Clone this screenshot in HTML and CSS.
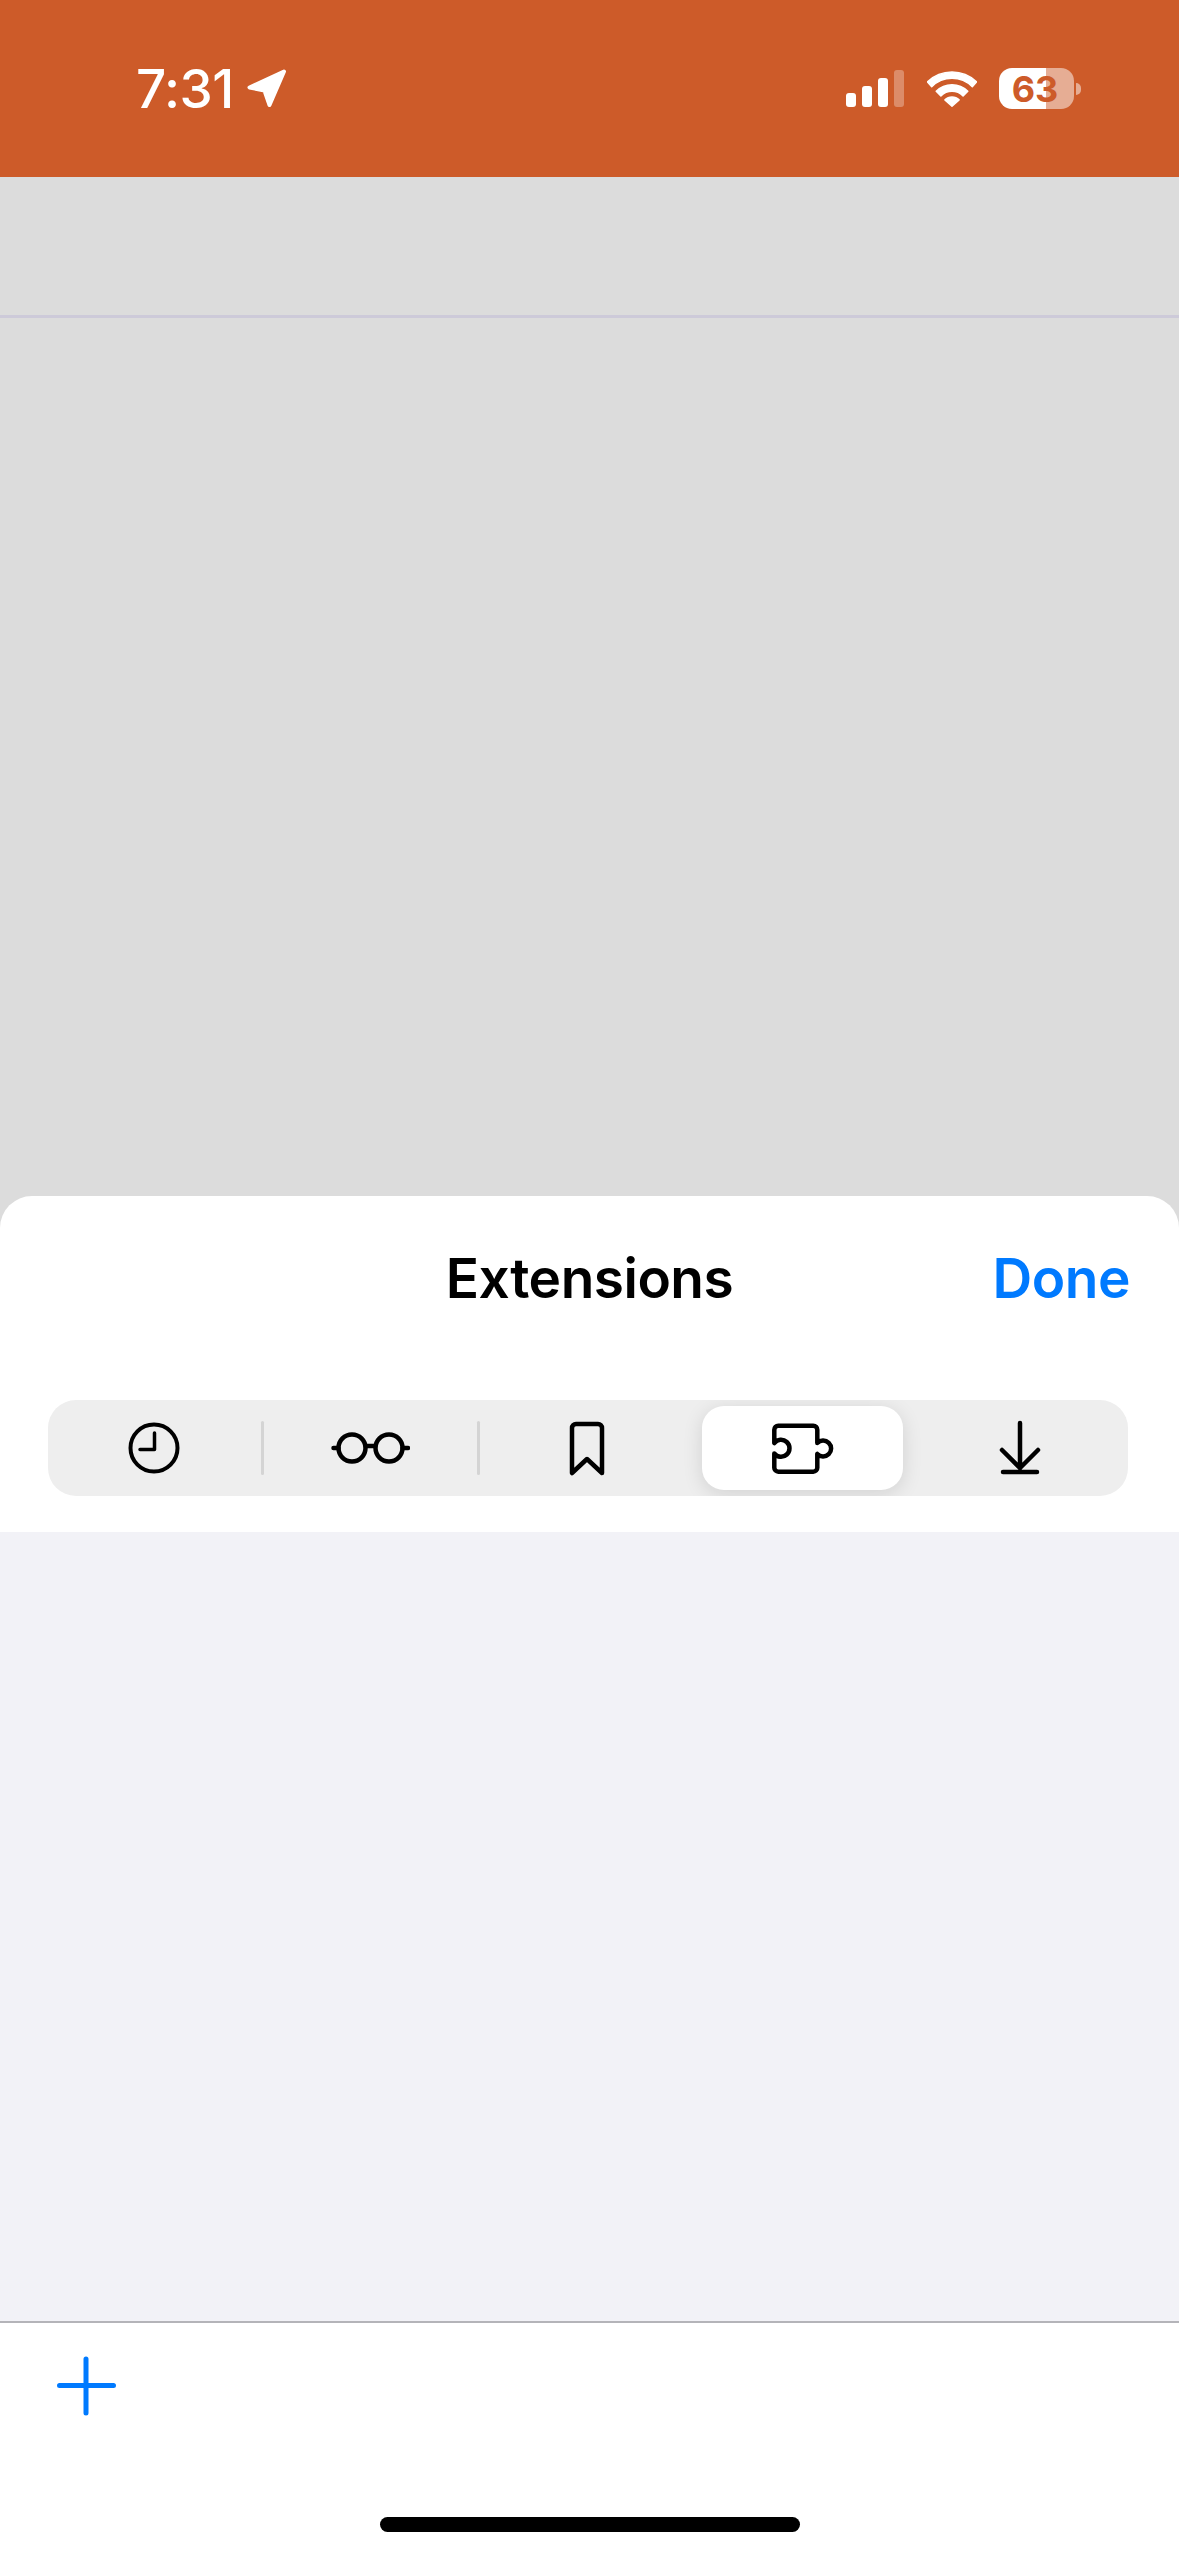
FILE: index.html
```html
<!DOCTYPE html>
<html lang="en">
<head>
    <meta charset="UTF-8">
    <meta name="viewport" content="width=device-width, initial-scale=1.0">
    <title>Extensions</title>
    <link rel="stylesheet" href="styles.css">
</head>
<body>
    <div class="status-bar">
        <div class="time">7:31</div>
        <svg class="location" width="40" height="39" viewBox="0 0 40 39">
            <path d="M37 2.5 L2.5 18.5 L17.5 21.5 L22.5 36 Z" fill="#fff" stroke="#fff" stroke-width="4" stroke-linejoin="round"/>
        </svg>
        <div class="status-right">
            <div class="signal">
                <span class="bar bar-1"></span>
                <span class="bar bar-2"></span>
                <span class="bar bar-3"></span>
                <span class="bar bar-4"></span>
            </div>
            <svg class="wifi" width="50" height="38" viewBox="0 0 50 38">
                <g fill="#fff" stroke="#fff" stroke-width="1.5" stroke-linejoin="round">
                    <path d="M0.5 11.9 A35.5 35.5 0 0 1 49.5 11.9 L45.3 16.7 A28.7 28.7 0 0 0 4.7 16.7 Z"/>
                    <path d="M9.2 21.2 A22.3 22.3 0 0 1 40.8 21.2 L36.1 25.9 A15.7 15.7 0 0 0 13.9 25.9 Z"/>
                    <path d="M17.9 29.9 A10 10 0 0 1 32.1 29.9 L25 36.2 Z"/>
                </g>
            </svg>
            <div class="battery-wrap">
                <div class="battery">63</div>
                <span class="battery-nub"></span>
            </div>
        </div>
    </div>

    <div class="backdrop">
        <div class="backdrop-top"></div>
    </div>

    <div class="sheet">
        <div class="sheet-header">
            <span></span>
            <h1>Extensions</h1>
            <a class="done">Done</a>
        </div>

        <div class="segments">
            <div class="seg-cell">
                <svg width="52" height="52" viewBox="0 0 52 52" fill="none" stroke="#000" stroke-width="4" stroke-linecap="round" stroke-linejoin="round">
                    <circle cx="26" cy="26" r="23.5"/>
                    <path d="M26.5 11 V27.5 H12" stroke-width="3.5"/>
                </svg>
            </div>
            <span class="seg-sep"></span>
            <div class="seg-cell">
                <svg class="glasses" width="80" height="36" viewBox="0 0 80 36" fill="none" stroke="#000" stroke-width="4.5" stroke-linecap="round" stroke-linejoin="round">
                    <circle cx="22" cy="18" r="13.5"/>
                    <circle cx="59" cy="18" r="13.5"/>
                    <path d="M35.5 16 H45.5 M3.5 18 H8.5 M72.5 18 H78"/>
                </svg>
            </div>
            <span class="seg-sep"></span>
            <div class="seg-cell">
                <svg width="36" height="56" viewBox="0 0 36 56" fill="none" stroke="#000" stroke-width="4.5" stroke-linecap="round" stroke-linejoin="round">
                    <path d="M7 4 H29 A4 4 0 0 1 33 8 V53 L18 39 L3 53 V8 A4 4 0 0 1 7 4 Z"/>
                </svg>
            </div>
            <span class="seg-sep seg-sep-hidden"></span>
            <div class="seg-cell seg-cell-active">
                <div class="seg-pill">
                    <svg class="puzzle" width="70" height="58" viewBox="0 0 70 58" fill="none" stroke="#000" stroke-width="4.5" stroke-linecap="round" stroke-linejoin="round">
                        <path d="M8.3 5.7 H43.3 A4 4 0 0 1 47.3 9.7 V23 A8 8 0 1 1 47.3 34 V47.7 A4 4 0 0 1 43.3 51.7 H8.3 A4 4 0 0 1 4.3 47.7 V33.5 A8.5 8.5 0 1 0 4.3 23 V9.7 A4 4 0 0 1 8.3 5.7 Z"/>
                    </svg>
                </div>
            </div>
            <span class="seg-sep seg-sep-hidden"></span>
            <div class="seg-cell">
                <svg width="44" height="56" viewBox="0 0 44 56" fill="none" stroke="#000" stroke-width="4.5" stroke-linecap="round" stroke-linejoin="round">
                    <path d="M22 3 V48 M4 30 L22 48 L40 30 M5 52 H39"/>
                </svg>
            </div>
        </div>

        <div class="sheet-content"></div>

        <div class="sheet-footer">
            <svg class="plus" width="60" height="60" viewBox="0 0 60 60" fill="none" stroke="#007AFF" stroke-width="5" stroke-linecap="round">
                <path d="M29 3 V57 M2.5 29.5 H56.5"/>
            </svg>
            <div class="home-indicator"></div>
        </div>
    </div>
</body>
</html>
```

FILE: styles.css
```css
* {
    box-sizing: border-box;
}
body {
    margin: 0;
    width: 1179px;
    height: 2556px;
    overflow: hidden;
    display: flex;
    flex-direction: column;
    font-family: Inter, "Liberation Sans", sans-serif;
    background-color: #fff;
}
.status-bar {
    height: 177px;
    flex-shrink: 0;
    display: flex;
    align-items: center;
    padding: 0 98px 0 136px;
    background-color: #CD5B29;
    color: #fff;
}
.time {
    font-size: 53px;
    font-weight: 500;
    line-height: 42px;
    letter-spacing: -0.5px;
}
.location {
    margin-left: 13px;
}
.status-right {
    margin-left: auto;
    display: flex;
    align-items: center;
}
.signal {
    display: flex;
    align-items: flex-end;
    gap: 6px;
    height: 37px;
}
.bar {
    width: 10px;
    border-radius: 3px;
    background-color: #fff;
}
.bar-1 {
    height: 14px;
}
.bar-2 {
    height: 21px;
}
.bar-3 {
    height: 29px;
}
.bar-4 {
    height: 37px;
    background-color: rgba(255,255,255,0.3);
}
.wifi {
    margin-left: 23px;
}
.battery-wrap {
    margin-left: 22px;
    display: flex;
    align-items: center;
    gap: 2px;
}
.battery {
    width: 75px;
    height: 41px;
    border-radius: 13px;
    display: flex;
    align-items: center;
    justify-content: center;
    padding-right: 3px;
    background: linear-gradient(to right, #fff 62.7%, rgba(255,255,255,0.5) 62.7%);
    color: #CD5B29;
    font-size: 36px;
    font-weight: 700;
}
.battery-nub {
    width: 5px;
    height: 12px;
    border-radius: 0 6px 6px 0;
    background-color: rgba(255,255,255,0.5);
}
.backdrop {
    height: 1059px;
    flex-shrink: 0;
    margin-bottom: -40px;
    background-color: #DCDCDC;
}
.backdrop-top {
    height: 141px;
    border-bottom: 3px solid #CDCAD9;
}
.sheet {
    flex: 1;
    display: flex;
    flex-direction: column;
    position: relative;
    border-radius: 32px 32px 0 0;
    overflow: hidden;
    background-color: #fff;
}
.sheet-header {
    height: 164px;
    flex-shrink: 0;
    display: grid;
    grid-template-columns: 1fr auto 1fr;
    align-items: center;
    padding: 0 49px;
}
h1 {
    margin: 0;
    font-size: 55px;
    font-weight: 600;
    color: #000;
    letter-spacing: -0.5px;
}
.done {
    justify-self: end;
    font-size: 55px;
    font-weight: 600;
    color: #007AFF;
    letter-spacing: -0.5px;
}
.segments {
    height: 96px;
    flex-shrink: 0;
    margin: 40px 51px 36px 48px;
    display: flex;
    align-items: center;
    border-radius: 28px;
    overflow: hidden;
    background-color: #EEEEEE;
}
.seg-cell {
    width: 212px;
    height: 100%;
    flex-shrink: 0;
    display: flex;
    align-items: center;
    justify-content: center;
}
.seg-sep {
    width: 3px;
    height: 54px;
    margin: 0 0.75px;
    flex-shrink: 0;
    border-radius: 2px;
    background-color: #D4D4D4;
}
.seg-sep-hidden {
    background-color: transparent;
}
.seg-pill {
    width: 201px;
    height: 84px;
    margin-right: 2px;
    display: flex;
    align-items: center;
    justify-content: center;
    border-radius: 22px;
    background-color: #fff;
    box-shadow: 0 4px 20px rgba(0,0,0,0.12);
}
.glasses {
    margin-right: 1px;
}
.puzzle {
    margin: 2px 0 0 5px;
}
.sheet-content {
    flex: 1;
    background-color: #F2F2F7;
}
.sheet-footer {
    height: 235px;
    flex-shrink: 0;
    display: flex;
    flex-direction: column;
    justify-content: space-between;
    padding: 33px 0 24px;
    border-top: 2px solid #B4B4B9;
    background-color: #fff;
}
.plus {
    margin-left: 57px;
}
.home-indicator {
    width: 420px;
    height: 15px;
    align-self: center;
    border-radius: 8px;
    background-color: #000;
}
```
